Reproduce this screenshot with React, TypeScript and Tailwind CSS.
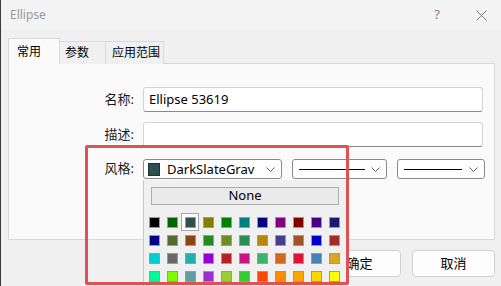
import React from 'react'

const font = { fontFamily: '"Noto Sans", "Noto Sans CJK SC", sans-serif' }

const colors = [
  ['#000000', '#006400', '#2f4f4f', '#808000', '#008000', '#008080', '#000080', '#800080', '#800000', '#4b0082', '#191970'],
  ['#00008b', '#556b2f', '#8b4513', '#228b22', '#6b8e23', '#2e8b57', '#b8860b', '#483d8b', '#a0522d', '#0000cd', '#a52a2a'],
  ['#00ced1', '#696969', '#20b2aa', '#9400d3', '#b22222', '#c71585', '#3cb371', '#d2691e', '#dc143c', '#4682b4', '#daa520'],
  ['#00fa9a', '#7cfc00', '#5f9ea0', '#9932cc', '#9acd32', '#32cd32', '#ff4500', '#ff8c00', '#ffa500', '#ffd700', '#ffff00'],
]

function Chevron() {
  return (
    <svg width="9" height="5" viewBox="0 0 9 5" className="shrink-0">
      <path d="M0.5 0.5 L4.5 4.5 L8.5 0.5" fill="none" stroke="#606060" strokeWidth="1" />
    </svg>
  )
}

function LineCombo({ width, line }: { width: string; line: string }) {
  return (
    <div className={`${width} h-[20px] bg-white border border-[#8a8a8a] rounded-[3px] flex items-center pl-[6px] pr-[6px] justify-between`}>
      <div className={`${line} h-px bg-black`} />
      <Chevron />
    </div>
  )
}

function Row({ label, children, className }: { label: string; children: React.ReactNode; className?: string }) {
  return (
    <div className={`flex items-center ${className ?? ''}`}>
      <span className="w-[126px] text-right text-[13px] text-[#1a1a1a] pr-[1px]">{label}</span>
      <div className="ml-[8px] flex items-center">{children}</div>
    </div>
  )
}

export default function App() {
  return (
    <div className="relative w-[501px] h-[286px] bg-[#f0f0f0] overflow-hidden border-l-[1.5px] border-[#3a3a3a]" style={font}>
      {/* Title bar */}
      <div className="h-[30px] bg-[#f3f3f3] flex items-center pl-[9px] pr-[14px]">
        <span className="text-[12px] text-[#9a9a9a]">Ellipse</span>
        <span className="ml-auto text-[13px] text-[#808080] mr-[36px]">?</span>
        <svg width="11" height="11" viewBox="0 0 11 11">
          <path d="M0.5 0.5 L10.5 10.5 M10.5 0.5 L0.5 10.5" stroke="#7a7a7a" strokeWidth="1" />
        </svg>
      </div>

      {/* Tabs */}
      <div className="flex items-end pl-[7px] pt-[8px] h-[64px] -mt-[30px] pt-[38px] relative z-10">
        <div className="h-[26px] w-[52px] bg-[#fafafa] border border-b-0 border-[#d9d9d9] text-[12px] pl-[8px] flex items-center text-black">常用</div>
        <div className="h-[23px] w-[46px] bg-[#f0f0f0] border border-l-0 border-b-0 border-[#d9d9d9] text-[12px] pl-[5px] flex items-center text-black">参数</div>
        <div className="h-[23px] w-[58px] bg-[#f0f0f0] border border-l-0 border-b-0 border-[#d9d9d9] text-[12px] pl-[6px] flex items-center text-black">应用范围</div>
      </div>

      {/* Pane */}
      <div className="ml-[7px] w-[487px] h-[177px] -mt-px bg-[#fafafa] border border-[#d9d9d9] pt-[23px]">
        <Row label="名称:">
          <div className="w-[340px] h-[25px] bg-white border border-[#d4d4d4] border-b-[#8a8a8a] rounded-[3px] flex items-center pl-[5px] text-[13px] text-black">
            Ellipse 53619
          </div>
        </Row>
        <Row label="描述:" className="mt-[10px]">
          <div className="w-[340px] h-[25px] bg-white border border-[#d4d4d4] border-b-[#8a8a8a] rounded-[3px]" />
        </Row>
        <Row label="风格:" className="mt-[12px]">
          <div className="w-[139px] h-[20px] bg-white border border-[#8a8a8a] rounded-[3px] flex items-center pl-[4px] pr-[6px]">
            <div className="w-[12px] h-[13px] bg-[#2f4f4f] border border-[#1e3030]" />
            <span className="ml-[7px] text-[13px] text-black leading-none">DarkSlateGrav</span>
            <span className="ml-auto"><Chevron /></span>
          </div>
          <div className="ml-[10px]"><LineCombo width="w-[95px]" line="w-[66px]" /></div>
          <div className="ml-[10px]"><LineCombo width="w-[88px]" line="w-[58px]" /></div>
        </Row>
      </div>

      {/* Buttons */}
      <div className="flex justify-end gap-[11px] pr-[6px] mt-[10px]">
        <button className="w-[83px] h-[27px] bg-[#fdfdfd] border border-[#d0d0d0] rounded-[4px] text-[13px] text-black">确定</button>
        <button className="w-[83px] h-[27px] bg-[#fdfdfd] border border-[#d0d0d0] rounded-[4px] text-[13px] text-black">取消</button>
      </div>

      {/* Color dropdown */}
      <div className="absolute left-[142px] top-[180px] w-[204px] h-[110px] bg-[#f0f0f0] border-l border-[#c8c8c8] pl-[1px] pt-[7px]">
        <div className="ml-[6px] w-[188px] h-[18px] bg-[#e9e9e9] border border-[#adadad] text-[13px] text-black flex items-center justify-center">None</div>
        <div className="mt-[8px] grid grid-cols-[repeat(11,18px)]">
          {colors.flat().map((c, i) => (
            <div
              key={i}
              className={`w-[18px] h-[18px] flex items-center justify-center ${i === 2 ? 'bg-white border border-[#a8a8a8]' : ''}`}
            >
              <div className="w-[11px] h-[11px] border border-[#9a9a9a]" style={{ background: c }} />
            </div>
          ))}
        </div>
      </div>

      {/* Annotation */}
      <div className="absolute left-[84px] top-[145px] w-[264px] h-[140px] border-[3px] border-[#e05252] rounded-[2px]" />
    </div>
  )
}
